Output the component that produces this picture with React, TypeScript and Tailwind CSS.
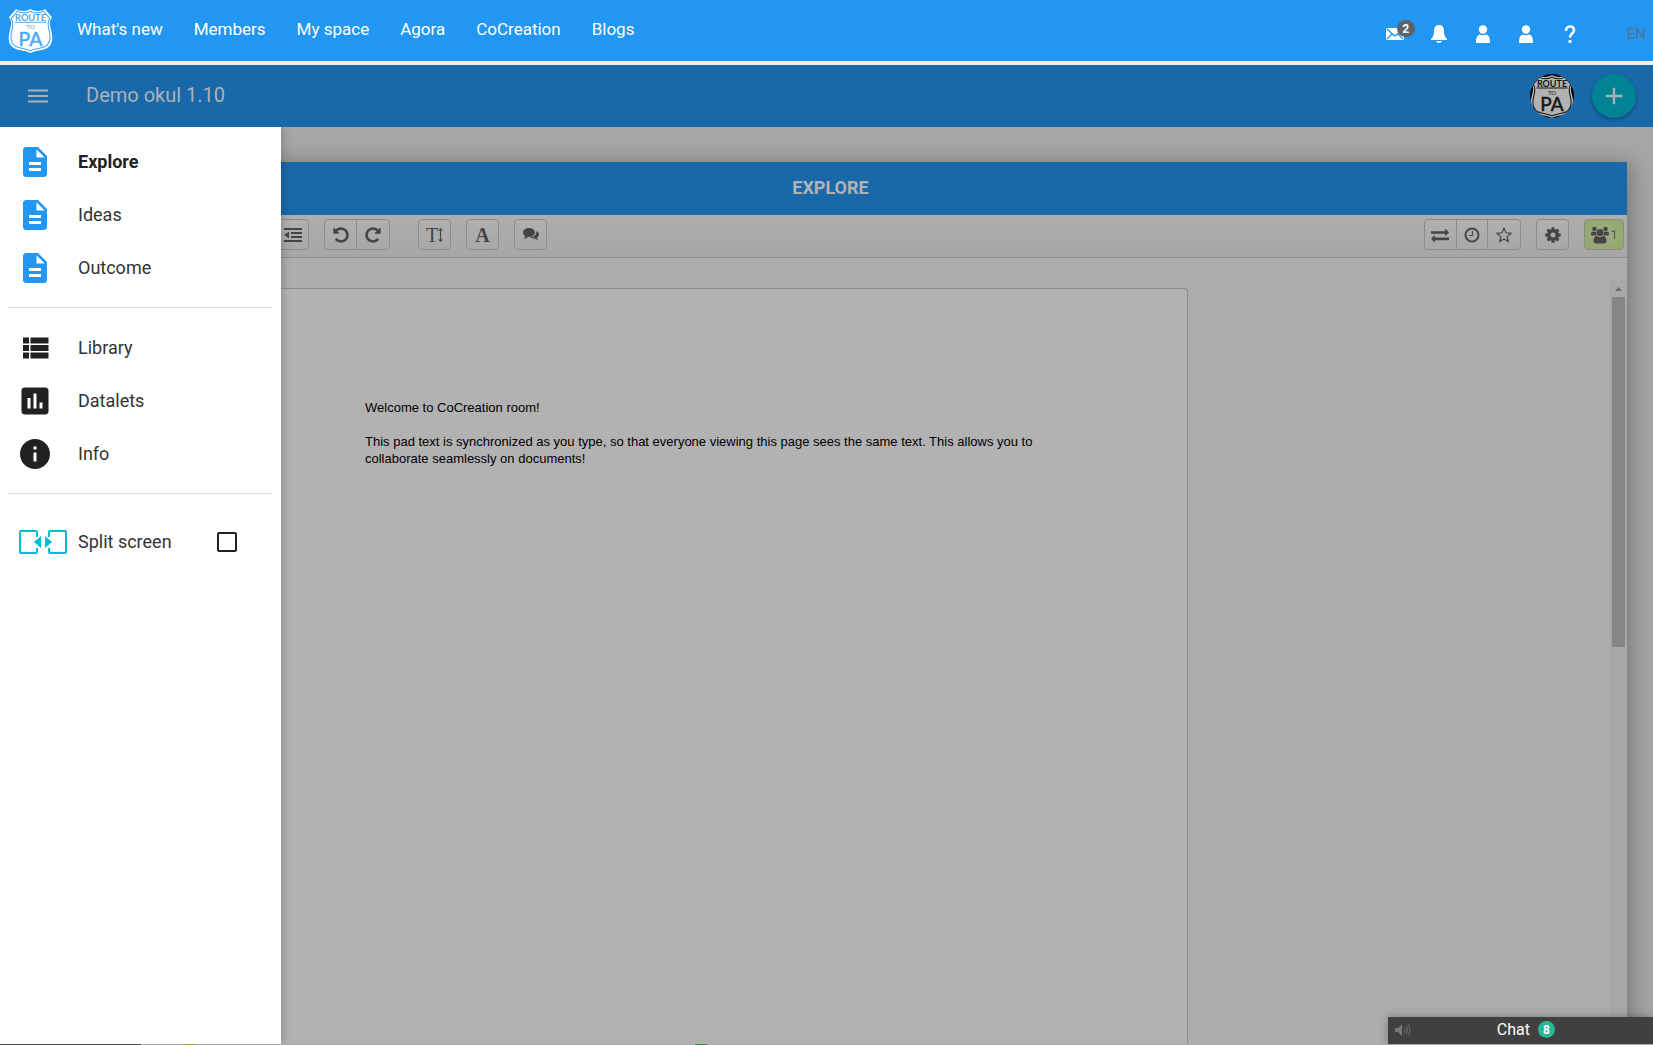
import React from "react";
import { MdAdd, MdDescription, MdInfo, MdInsertChart, MdMenu } from "react-icons/md";

const navLinks = ["What's new", "Members", "My space", "Agora", "CoCreation", "Blogs"];

type ShieldProps = { paper: string; ink: string; className: string; backdrop?: string };

function Shield({ paper, ink, className, backdrop }: ShieldProps) {
  const outline =
    "M22 1c3 2 10 3 14 0l7 8c-3 4-2 8-1 12 2 7 2 13-2 17-4 4-12 3-18 6-6-3-14-2-18-6-4-4-4-10-2-17 1-4 2-8-1-12l7-8c4 3 11 2 14 0z";
  return (
    <svg viewBox="0 0 44 44" className={className} role="img" aria-label="Route to PA">
      {backdrop && <rect width="44" height="44" fill={backdrop} />}
      <path d={outline} fill={paper} />
      <path d={outline} fill="none" stroke={ink} strokeWidth="1.2" transform="translate(2.2 2.2) scale(.9)" />
      <path d="M6.500 14h31" stroke={ink} strokeWidth="1" />
      <g fill={ink} textAnchor="middle" fontFamily="Lato, sans-serif">
        <text x="22" y="12.500" fontSize="9" fontWeight="700">ROUTE</text>
        <text x="22" y="20.500" fontSize="6">TO</text>
        <text x="22" y="37" fontSize="19" stroke={ink} strokeWidth=".5">PA</text>
      </g>
    </svg>
  );
}

function UserIcon() {
  return (
    <svg viewBox="0 0 14 18" className="h-[18px] w-[14px]" fill="currentColor" aria-hidden="true">
      <circle cx="7" cy="4.500" r="4.200" />
      <path d="M0 17c0-5 2-7.500 4-7.500 2 1 4 1 6 0 2 0 4 2.500 4 7.500 0 .6-.4 1-1 1H1c-.6 0-1-.4-1-1z" />
    </svg>
  );
}

const undoPath =
  "M1664 896q0 156-61 298t-164 245-245 164-298 61q-172 0-327-72.5t-264-204.5q-7-10-6.500-22.5t8.500-20.5l137-138q10-9 25-9 16 2 23 12 73 95 179 147t225 52q104 0 198.500-40.5t163.500-109.5 109.500-163.5 40.500-198.5-40.500-198.5-109.500-163.5-163.500-109.500-198.500-40.500q-98 0-188 35.500t-160 101.500l137 138q31 30 14 69-17 40-59 40h-448q-26 0-45-19t-19-45v-448q0-42 40-59 39-17 69 14l130 129q107-101 244.500-156.5t284.500-55.500q156 0 298 61t245 164 164 245 61 298z";
const exchangePath =
  "M1792 1184v192q0 13-9.500 22.500t-22.500 9.500h-1376v192q0 13-9.500 22.500t-22.500 9.500q-12 0-24-10l-319-320q-9-9-9-22 0-14 9-23l320-320q9-9 23-9 13 0 22.500 9.500t9.500 22.500v192h1376q13 0 22.500 9.500t9.500 22.500zm0-544q0 14-9 23l-320 320q-9 9-23 9-13 0-22.500-9.500t-9.500-22.500v-192h-1376q-13 0-22.500-9.500t-9.500-22.500v-192q0-13 9.500-22.500t22.500-9.500h1376v-192q0-14 9-23t23-9q12 0 24 10l319 319q9 9 9 23z";
const gearPath =
  "M1152 896q0-106-75-181t-181-75-181 75-75 181 75 181 181 75 181-75 75-181zm512-109v222q0 12-8 23t-20 13l-185 28q-19 54-39 91 35 50 107 138 10 12 10 25t-9 23q-27 37-99 108t-94 71q-12 0-26-9l-138-108q-44 23-91 38-16 136-29 186-7 28-36 28h-222q-14 0-24.500-8.500t-11.500-21.500l-28-184q-49-16-90-37l-141 107q-10 9-25 9-14 0-25-11-126-114-165-168-7-10-7-23 0-12 8-23 15-21 51-66.500t54-70.500q-27-50-41-99l-183-27q-13-2-21-12.500t-8-23.500v-222q0-12 8-23t19-13l186-28q14-46 39-92-40-57-107-138-10-12-10-24 0-10 9-23 26-36 98.500-107.500t94.500-71.500q13 0 26 10l138 107q44-23 91-38 16-136 29-186 7-28 36-28h222q14 0 24.500 8.500t11.500 21.500l28 184q49 16 90 37l142-107q9-9 24-9 13 0 25 10 129 119 165 170 7 8 7 22 0 12-8 23-15 21-51 66.500t-54 70.500q26 50 41 98l183 28q13 2 21 12.500t8 23.500z";

function Glyph({ d, className = "size-[18px]" }: { d: string; className?: string }) {
  return (
    <svg viewBox="0 0 1792 1792" className={className} fill="currentColor" aria-hidden="true">
      <path d={d} />
    </svg>
  );
}

function ToolGroup({ children, className = "" }: { children: React.ReactNode; className?: string }) {
  return (
    <div className={`flex h-[31px] divide-x divide-[#8c8c8c] rounded-[4px] border border-[#8c8c8c] bg-linear-to-b from-[#b0b0b0] to-[#a8a8a8] ${className}`}>
      {children}
    </div>
  );
}

function Tool({ label, children }: { label: string; children: React.ReactNode }) {
  return (
    <button type="button" aria-label={label} className="flex w-[31px] flex-auto items-center justify-center text-[#454545]">
      {children}
    </button>
  );
}

function DrawerItem({ icon, label, active }: { icon: React.ReactNode; label: string; active?: boolean }) {
  return (
    <li>
      <a href="#" className="flex h-[53px] items-center pl-[17px] text-lg">
        <span className="w-[61px]">{icon}</span>
        <span className={active ? "font-bold text-[#212121]" : "text-[#333]"}>{label}</span>
      </a>
    </li>
  );
}

const docIcon = <MdDescription className="size-9 text-[#2196f3]" />;
const listIcon = (
  <svg viewBox="0 0 24 24" className="size-9" fill="currentColor" aria-hidden="true">
    <path d="M4 14h4v-4H4v4zm0 5h4v-4H4v4zM4 9h4V5H4v4zm5 5h12v-4H9v4zm0 5h12v-4H9v4zM9 5v4h12V5H9z" />
  </svg>
);

function Drawer() {
  return (
    <aside className="absolute inset-y-0 left-0 z-10 w-[281px] bg-white px-2 pt-2 shadow-[2px_0_8px_rgba(0,0,0,0.2)]">
      <ul className="-ml-2">
        <DrawerItem active label="Explore" icon={docIcon} />
        <DrawerItem label="Ideas" icon={docIcon} />
        <DrawerItem label="Outcome" icon={docIcon} />
      </ul>
      <hr className="my-[13px] mr-px border-[#dcdcdc]" />
      <ul className="-ml-2 text-[#212121]">
        <DrawerItem label="Library" icon={listIcon} />
        <DrawerItem label="Datalets" icon={<MdInsertChart className="size-9" />} />
        <DrawerItem label="Info" icon={<MdInfo className="size-9" />} />
      </ul>
      <hr className="mt-[13px] mr-px border-[#dcdcdc]" />
      <label className="mt-[21px] flex h-[53px] items-center pl-[11px] text-lg text-[#333]">
        <svg viewBox="0 0 48 24" className="mr-[11px] h-6 w-12" aria-hidden="true">
          <g fill="none" stroke="#00bcd4" strokeWidth="2" strokeLinejoin="round">
            <path d="M18 7V2q0-1-1-1H2q-1 0-1 1v20q0 1 1 1h15q1 0 1-1v-4" />
            <path d="M30 7V2q0-1 1-1h15q1 0 1 1v20q0 1-1 1H31q-1 0-1-1v-4" />
          </g>
          <path d="M22 6v12l-7-6zM26 6v12l7-6z" fill="#00bcd4" />
        </svg>
        <span className="flex-1">Split screen</span>
        <input type="checkbox" className="mr-[36px] size-5 appearance-none rounded-[2px] border-2 border-[#212121] checked:bg-[#212121]" />
      </label>
    </aside>
  );
}

function PadToolbar() {
  return (
    <div className="flex h-[43px] items-start justify-between border-b border-[#8c8c8c] bg-linear-to-b from-[#aeaeae] to-[#a6a6a6] pt-1 pr-[3px] pl-[242px]">
      <div className="flex gap-[15px]">
        <ToolGroup>
          <Tool label="Outdent">
            <svg viewBox="0 0 18 14" className="h-[14px] w-[18px]" fill="currentColor" aria-hidden="true">
              <path d="M0 0h18v2H0zM7 4h11v2H7zM7 8h11v2H7zM0 12h18v2H0zM5 3.500v7L0 7z" />
            </svg>
          </Tool>
        </ToolGroup>
        <ToolGroup className="w-[66px]">
          <Tool label="Undo"><Glyph d={undoPath} /></Tool>
          <Tool label="Redo"><Glyph d={undoPath} className="size-[18px] -scale-x-100" /></Tool>
        </ToolGroup>
        <ToolGroup className="ml-[13px]">
          <Tool label="Font size">
            <span className="font-['Liberation_Serif',serif] text-xl leading-5">T</span>
            <svg viewBox="0 0 5 14" className="h-[14px] w-[5px] shrink-0" aria-hidden="true">
              <path d="M2.500 1v12" stroke="currentColor" strokeWidth="1.200" />
              <path d="M2.500 0L5 2.500H0zM2.500 14L5 11.500H0z" fill="currentColor" />
            </svg>
          </Tool>
        </ToolGroup>
        <ToolGroup>
          <Tool label="Font">
            <span className="font-['Liberation_Serif',serif] text-xl leading-5 font-bold">A</span>
          </Tool>
        </ToolGroup>
        <ToolGroup>
          <Tool label="Comments">
            <svg viewBox="0 0 16 13" className="h-[13px] w-4" fill="currentColor" aria-hidden="true">
              <path d="M6 0c3.400 0 6 2 6 4.500S9.400 9 6 9l-1-.1C4 10 2.500 10.600 1 10.700c.7-.7 1.200-1.500 1.200-2.500C.9 7.400 0 6 0 4.500 0 2 2.600 0 6 0z" />
              <path d="M13.200 3C15 3.700 16 5 16 6.500c0 1.300-.8 2.400-2 3.200.1.900.5 1.500 1.200 2.200-1.500 0-2.700-.5-3.700-1.600-1.600.2-3.200-.1-4.500-.8C11 9.500 14 6.500 13.200 3z" />
            </svg>
          </Tool>
        </ToolGroup>
      </div>
      <div className="flex gap-[15px]">
        <ToolGroup className="w-[97px]">
          <Tool label="Import/Export"><Glyph d={exchangePath} /></Tool>
          <Tool label="Timeslider">
            <svg viewBox="0 0 16 16" className="size-4" fill="none" stroke="currentColor" aria-hidden="true">
              <circle cx="8" cy="8" r="6.500" strokeWidth="2" />
              <path d="M8.500 4v4.500H5" strokeWidth="1.200" />
            </svg>
          </Tool>
          <Tool label="Save revision">
            <svg viewBox="0 0 16 16" className="size-4" fill="none" stroke="currentColor" strokeWidth="1.200" aria-hidden="true">
              <path d="M8 1.200l2 4.600 5 .5-3.800 3.300 1.200 5L8 12l-4.400 2.600 1.200-5L1 6.300l5-.5z" />
            </svg>
          </Tool>
        </ToolGroup>
        <ToolGroup>
          <Tool label="Settings"><Glyph d={gearPath} /></Tool>
        </ToolGroup>
        <button type="button" aria-label="Users" className="flex h-[31px] w-10 items-center justify-center rounded-[4px] border border-[#8c8c8c] bg-radial from-[#a3ab8e] to-[#8fa962] text-[#454545]">
          <svg viewBox="0 0 18 18" className="size-[18px]" fill="currentColor" aria-hidden="true">
            <circle cx="9" cy="6.500" r="3.500" />
            <circle cx="3.500" cy="3" r="2.300" />
            <circle cx="14.500" cy="3" r="2.300" />
            <path d="M0 8.500C0 6.500.5 5.500 1.500 5.500c1.300.7 2.500.7 3.500.3 0 1.800.3 2.700 1 3.700H1.500C.6 9.500 0 9.300 0 8.500zM18 8.500c0-2-.5-3-1.500-3-1.300.7-2.500.7-3.500.3 0 1.800-.3 2.700-1 3.700h4.500c.9 0 1.500-.2 1.500-1z" />
            <path d="M2.500 15c0-3 1.200-5 3-5 2 1.400 5 1.400 7 0 1.800 0 3 2 3 5 0 1.500-1 2.500-2.500 2.500H5C3.500 17.500 2.500 16.500 2.500 15z" />
          </svg>
          <span className="ml-[2px] text-xs leading-4 text-[#555]">1</span>
        </button>
      </div>
    </div>
  );
}

export default function App() {
  return (
    <div className="flex min-h-screen flex-col bg-[#a6a6a6] font-[Roboto,sans-serif]">
      <header className="flex h-[61px] items-center bg-[#2196f3] pr-[7px] pl-2 text-white">
        <a href="#" className="mr-6">
          <Shield paper="#fff" ink="#4ba9f5" className="size-[45px]" />
        </a>
        <nav className="flex flex-1 gap-[31px] pb-[3px] text-[17px] leading-6">
          {navLinks.map((link) => (
            <a key={link} href="#">{link}</a>
          ))}
        </nav>
        <div className="flex items-center pt-[7px]">
          <button type="button" aria-label="Messages, 2 unread" className="relative mr-[27px] h-[18px] w-[18px]">
            <svg viewBox="0 0 18 12" className="h-3 w-[18px]" aria-hidden="true">
              <rect width="18" height="12" rx="1.500" fill="#fff" />
              <path d="M1 1l7 6.500h2L17 1M1 11l5-5M17 11l-5-5" fill="none" stroke="#2196f3" strokeWidth="1.300" />
            </svg>
            <span className="absolute -top-[5px] left-[11px] flex h-[17px] w-[18px] items-center justify-center rounded-full bg-[#5b646c] text-xs font-bold">2</span>
          </button>
          <button type="button" aria-label="Notifications" className="mr-[29px]">
            <svg viewBox="0 0 16 18" className="h-[18px] w-4" fill="currentColor" aria-hidden="true">
              <path d="M8 0c3.500 0 5 2.500 5 6 0 4.500 1 6 3 8v1H0v-1c2-2 3-3.500 3-8 0-3.500 1.500-6 5-6zM5 16h6c-.5 1.300-1.500 2-3 2s-2.500-.7-3-2z" />
            </svg>
          </button>
          <button type="button" aria-label="Profile" className="mr-[29px]"><UserIcon /></button>
          <button type="button" aria-label="Account" className="mr-[31px]"><UserIcon /></button>
          <button type="button" aria-label="Help" className="mr-[51px]">
            <svg viewBox="0 0 12 18" className="h-[18px] w-3" aria-hidden="true">
              <path d="M2 6C2 3 3.500 1.500 6 1.500S10 3 10 5.200C10 8.500 6 8.500 6 12.500" fill="none" stroke="#fff" strokeWidth="2.600" />
              <path d="M4.600 15h2.800v3H4.600z" fill="#fff" />
            </svg>
          </button>
          <button type="button" className="text-[15px] leading-[18px] text-[#53748e]">EN</button>
        </div>
      </header>

      <div className="mt-1 flex h-[62px] items-center bg-[#1969aa] pr-[17px] pl-[26px] text-[#a9b2b9] outline-4 outline-[#eee] [clip-path:inset(-4px_0_0_0)]">
        <button type="button" aria-label="Menu" className="mr-9">
          <MdMenu className="size-6 scale-110" />
        </button>
        <h1 className="flex-1 pb-[2px] text-xl">Demo okul 1.10</h1>
        <Shield paper="#b2b2b2" ink="#151515" backdrop="#000" className="mr-[18px] size-11 rounded-full" />
        <button type="button" aria-label="Add" className="flex size-11 items-center justify-center rounded-full bg-[#008394] shadow-[0_2px_4px_rgba(0,0,0,0.3)]">
          <MdAdd className="size-7" />
        </button>
      </div>

      <main className="relative flex flex-1 flex-col overflow-hidden">
        <Drawer />
        <section className="mt-[35px] mr-[26px] ml-[34px] flex flex-1 flex-col bg-[#adadad] shadow-[2px_4px_20px_3px_rgba(0,0,0,0.28)]">
          <h2 className="flex h-[53px] items-center justify-center bg-[#1969aa] pb-[2px] text-lg font-bold text-[#b2b2b2]">EXPLORE</h2>
          <PadToolbar />
          <div className="flex flex-1 pt-[22px]">
            <article className="mt-2 mr-[422px] ml-[216px] flex-1 rounded-t-[4px] border border-b-0 border-[#8c8c8c] bg-[#b2b2b2] pt-[110px] pr-[100px] pl-[114px] font-['Liberation_Sans',sans-serif] text-[13px] leading-[17px] text-black">
              <p className="mb-[17px]">Welcome to CoCreation room!</p>
              <p>
                This pad text is synchronized as you type, so that everyone viewing this page sees the same text. This allows you to
                <br />
                collaborate seamlessly on documents!
              </p>
            </article>
            <div className="flex w-[17px] flex-col items-center bg-[#a8a8a8]" aria-hidden="true">
              <svg viewBox="0 0 17 17" className="size-[17px]">
                <path d="M5 11l3.500-4 3.500 4z" fill="#6a6a6a" />
              </svg>
              <div className="h-[350px] w-[13px] bg-[#868686]" />
            </div>
          </div>
        </section>
        <button type="button" className="absolute right-0 bottom-0 z-20 flex h-[27px] w-[265px] items-center bg-[#404040] pr-[98px] pb-[2px] pl-[7px] text-base text-white shadow-[0_0_10px_rgba(0,0,0,0.3)]">
          <svg viewBox="0 0 16 12" className="mr-auto h-3 w-4" aria-hidden="true">
            <path d="M0 4h3l4-4v12L3 8H0z" fill="#777" />
            <path d="M9 3.500q2 2.500 0 5M11 2q3 4 0 8M13 .5q4 5.500 0 11" fill="none" stroke="#666" strokeWidth="1.200" />
          </svg>
          <span className="mr-2">Chat</span>
          <span className="flex size-[17px] items-center justify-center rounded-full bg-[#2ab795] text-xs font-bold">8</span>
        </button>
      </main>
      <div className="flex h-px bg-[#a9a9a9]">
        <div className="w-[141px] bg-[#505050]" />
        <div className="ml-[43px] w-3 bg-[#b59b35]" />
        <div className="ml-[499px] w-3 bg-[#3d8b41]" />
      </div>
    </div>
  );
}
